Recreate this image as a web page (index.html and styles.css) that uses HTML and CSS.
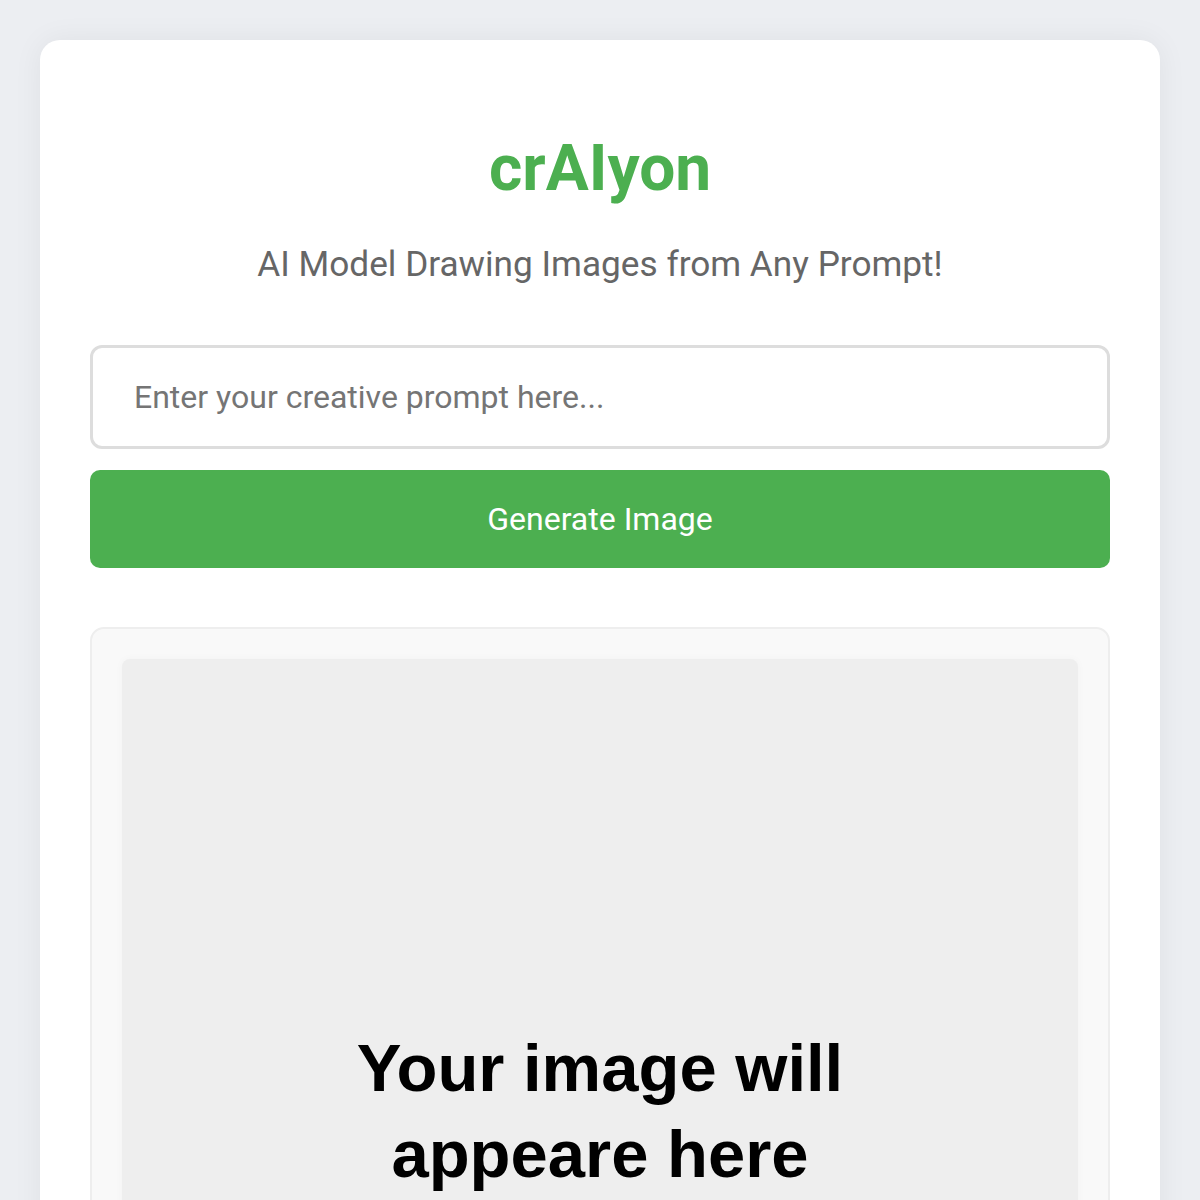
FILE: index.html
```html
<!DOCTYPE html>
<html lang="en">
<head>
<meta charset="utf-8">
<title>crAIyon</title>
<link rel="stylesheet" href="styles.css">
</head>
<body>
  <main class="card">
    <h1 class="title">crAIyon</h1>
    <p class="subtitle">AI Model Drawing Images from Any Prompt!</p>
    <input class="prompt" type="text" placeholder="Enter your creative prompt here...">
    <button class="generate" type="button">Generate Image</button>
    <section class="result">
      <div class="placeholder">
        <p class="placeholder-text">Your image will<br>appeare here</p>
      </div>
    </section>
  </main>
</body>
</html>
```

FILE: styles.css
```css
html, body {
  margin: 0;
  padding: 0;
}
body {
  background: #eceef2;
  font-family: Roboto, "Noto Sans", Arial, sans-serif;
  padding: 40px;
  min-height: 1200px;
  box-sizing: border-box;
}
.card {
  background: #ffffff;
  border-radius: 20px;
  box-shadow: 0 0 30px rgba(0, 0, 0, 0.06);
  padding: 90px 50px 60px;
  display: flex;
  flex-direction: column;
  align-items: stretch;
}
.title {
  margin: 0;
  text-align: center;
  color: #4caf50;
  font-size: 64px;
  line-height: 78px;
  font-weight: 700;
}
.subtitle {
  margin: 35px 0 0;
  text-align: center;
  color: #666666;
  font-size: 35.2px;
  line-height: 42px;
}
.prompt {
  margin-top: 60px;
  height: 104px;
  box-sizing: border-box;
  border: 3px solid #dddddd;
  border-radius: 12px;
  padding: 0 41px;
  font-family: Roboto, "Noto Sans", Arial, sans-serif;
  font-size: 32px;
  color: #333;
  outline: none;
}
.prompt::placeholder {
  color: #757575;
}
.generate {
  margin-top: 21px;
  height: 98px;
  border: none;
  border-radius: 10px;
  background: #4caf50;
  color: #ffffff;
  font-family: Roboto, "Noto Sans", Arial, sans-serif;
  font-size: 32px;
}
.result {
  margin-top: 59px;
  background: #f9f9f9;
  border: 2px solid #eeeeee;
  border-radius: 14px;
  padding: 30px;
}
.placeholder {
  height: 958px;
  background: #eeeeee;
  border-radius: 8px;
  box-shadow: 0 0 8px rgba(0, 0, 0, 0.03);
  display: flex;
  align-items: center;
  justify-content: center;
}
.placeholder-text {
  margin: 0;
  text-align: center;
  font-family: "Liberation Sans", Arial, sans-serif;
  font-weight: 700;
  font-size: 67px;
  line-height: 86px;
  color: #000000;
  transform: translateY(-27px);
}
```
